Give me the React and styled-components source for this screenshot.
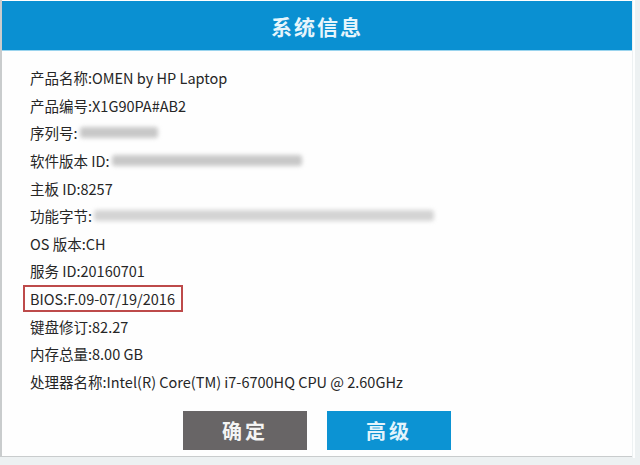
import React from "react"
import styled, { createGlobalStyle } from "styled-components"

const Global = createGlobalStyle`
  html, body {
    margin: 0;
    padding: 0;
    width: 640px;
    height: 465px;
    overflow: hidden;
    background: #edf1f2;
  }
`;

const Page = styled.div`
  display: flex;
  width: 640px;
  height: 465px;
`;

const Dialog = styled.div`
  display: flex;
  flex-direction: column;
  width: 630px;
  height: 456px;
  background: #fefefe;
  border-left: 2px solid #c9cccd;
  border-bottom: 1px solid #c9cccd;
  font-family: "Noto Sans CJK SC", sans-serif;
`;

const Strip = styled.div`
  width: 2px;
  height: 458px;
  margin-left: 1px;
  background: #fdfefe;
`;

const Header = styled.div`
  display: flex;
  align-items: center;
  justify-content: center;
  height: 49px;
  margin-top: 1px;
  background: #0a90d2;
  border-bottom: 1px solid #9ad4ee;
  color: #e6f5fc;
  font-size: 21px;
  font-weight: 700;
  letter-spacing: 2px;
`;

const Body = styled.div`
  display: flex;
  flex-direction: column;
  padding: 13px 0 0 28px;
  flex: 1;
`;

const Row = styled.div`
  display: flex;
  align-items: center;
  box-sizing: border-box;
  height: 27.6px;
  font-size: 14.5px;
  color: #262626;
  white-space: nowrap;

  ${p => p.$boxed && `
    align-self: flex-start;
    margin-left: -7px;
    padding: 0 6px 0 5px;
    border: 2px solid #bd4a4a;
  `}
`;

const Blur = styled.span`
  display: inline-block;
  width: ${p => p.$w}px;
  height: 11px;
  margin-left: 2px;
  background: ${p => p.$bg || "#c8c8c8"};
  filter: blur(2px);
  border-radius: 3px;
`;

const Buttons = styled.div`
  display: flex;
  justify-content: center;
  gap: 20px;
  margin: 16px 0 0 -28px;
`;

const Button = styled.div`
  display: flex;
  align-items: center;
  justify-content: center;
  width: 124px;
  height: 39px;
  background: ${p => (p.$primary ? "#0c93d3" : "#686566")};
  color: ${p => (p.$primary ? "#e3f4fc" : "#f4f4f4")};
  font-size: 20px;
  font-weight: 700;
  letter-spacing: 3px;
`;

const rows = [
  { label: "产品名称:", value: "OMEN by HP Laptop" },
  { label: "产品编号:", value: "X1G90PA#AB2" },
  { label: "序列号:", blur: 78 },
  { label: "软件版本 ID:", blur: 190 },
  { label: "主板 ID:", value: "8257" },
  { label: "功能字节:", blur: 340, light: true },
  { label: "OS 版本:", value: "CH" },
  { label: "服务 ID:", value: "20160701" },
  { label: "BIOS:", value: "F.09-07/19/2016", boxed: true },
  { label: "键盘修订:", value: "82.27" },
  { label: "内存总量:", value: "8.00 GB" },
  { label: "处理器名称:", value: "Intel(R) Core(TM) i7-6700HQ CPU @ 2.60GHz" },
];

export default function App() {
  return (
    <Page>
      <Global />
      <Dialog>
        <Header>系统信息</Header>
        <Body>
          {rows.map(r => (
            <Row key={r.label} $boxed={r.boxed}>
              {r.label}
              {r.value}
              {r.blur && <Blur $w={r.blur} $bg={r.light ? "#d4d4d4" : undefined} />}
            </Row>
          ))}
          <Buttons>
            <Button>确定</Button>
            <Button $primary>高级</Button>
          </Buttons>
        </Body>
      </Dialog>
      <Strip />
    </Page>
  );
}
